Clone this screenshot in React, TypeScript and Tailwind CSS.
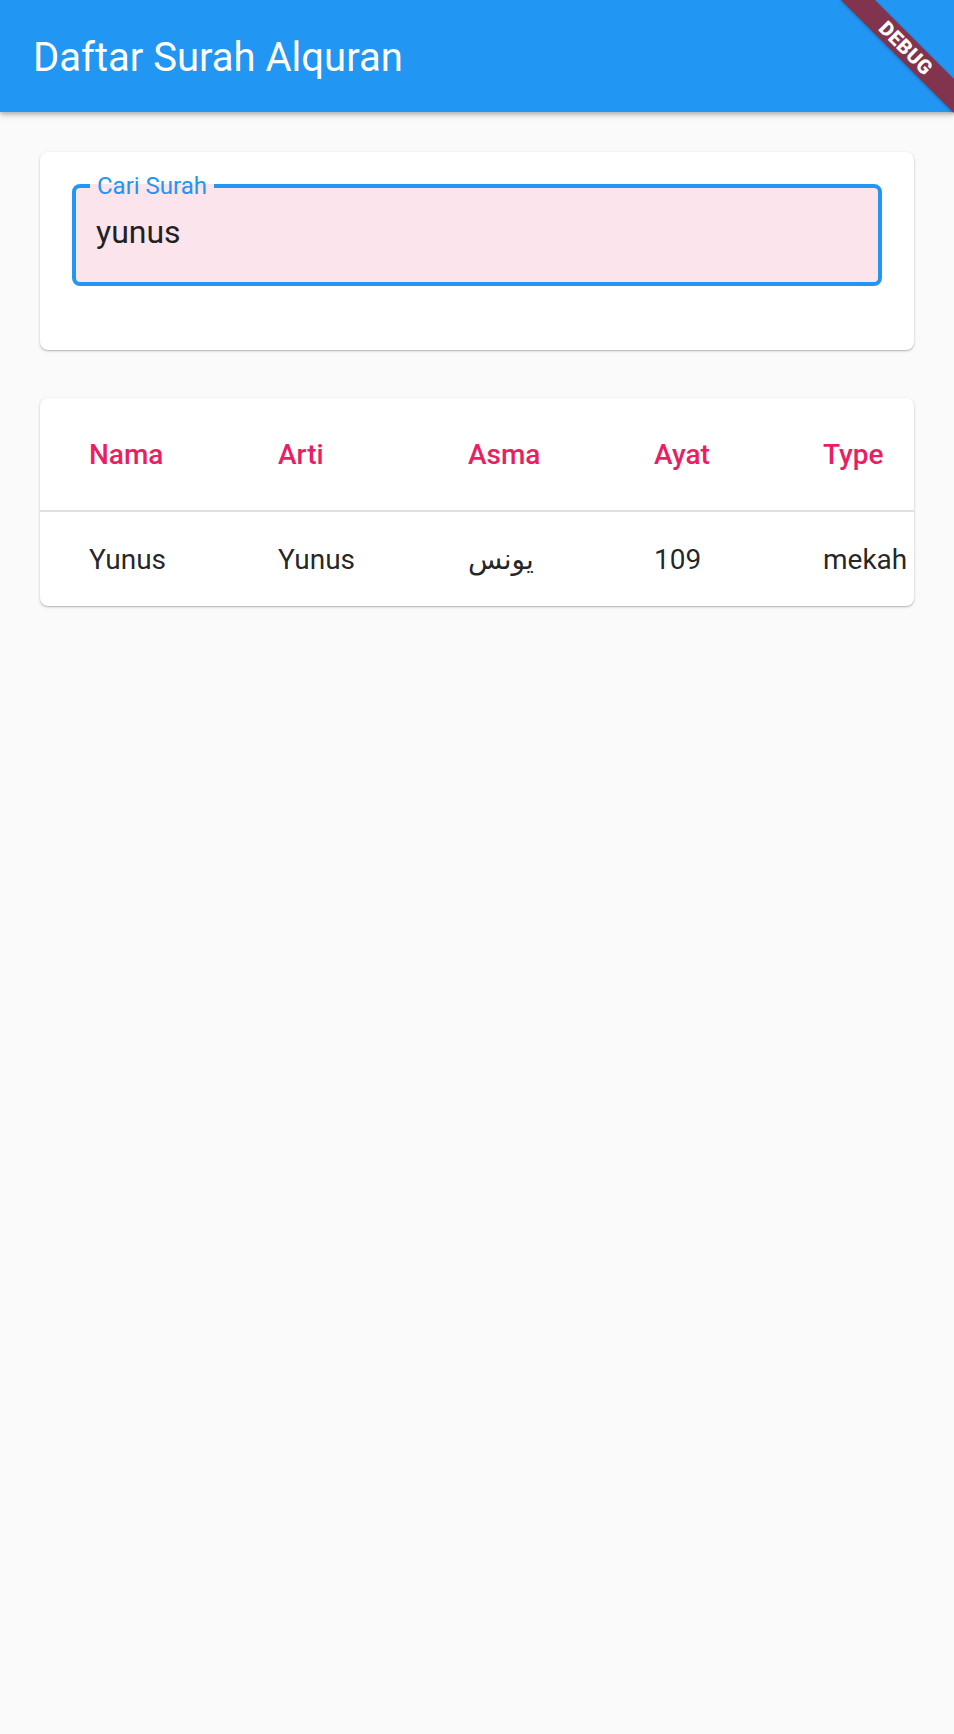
import React from "react";

const columns = [
  { label: "Nama", w: "w-[77px]" },
  { label: "Arti", w: "w-[78px]" },
  { label: "Asma", w: "w-[74px]" },
  { label: "Ayat", w: "w-[57px]" },
  { label: "Type", w: "w-[82px]" },
];

const rows = [["Yunus", "Yunus", "يونس", "109", "mekah"]];

const App = () => {
  return (
    <div className="relative min-h-[1734px] overflow-hidden bg-[#fafafa] font-['Roboto','DejaVu_Sans',sans-serif]">
      {/* App bar */}
      <header className="relative z-10 flex h-[112px] items-center bg-[#2196f3] px-[33px] pt-[4px] shadow-[0_2px_4px_rgba(0,0,0,0.2),0_4px_6px_rgba(0,0,0,0.12)]">
        <h1 className="text-[40px] leading-none font-normal text-white">Daftar Surah Alquran</h1>
      </header>

      {/* Debug banner */}
      <div className="absolute top-[36px] left-[826px] z-20 flex h-[24px] w-[160px] rotate-45 items-center justify-center bg-[#82344f] shadow-[0_1px_3px_rgba(0,0,0,0.25)]">
        <span className="text-[20px] leading-none font-black tracking-[0.5px] text-white">DEBUG</span>
      </div>

      <main className="px-[40px] pt-[40px]">
        {/* Search card */}
        <section className="rounded-[8px] bg-white px-[32px] pt-[32px] pb-[64px] shadow-[0_1px_3px_rgba(0,0,0,0.2),0_1px_1px_rgba(0,0,0,0.12)]">
          <div className="relative h-[102px] rounded-[8px] border-4 border-[#2196f3] bg-[#fce4ec] pt-[28px] pl-[20px]">
            <span className="absolute top-[-14px] left-[14px] bg-[linear-gradient(to_bottom,white_42%,#fce4ec_42%)] px-[7px] text-[24px] leading-[24px] text-[#2196f3]">
              Cari Surah
            </span>
            <div className="text-[32px] leading-[32px] text-[#212121]">yunus</div>
          </div>
        </section>

        {/* Result table */}
        <section className="mt-[48px] overflow-hidden rounded-[8px] bg-white shadow-[0_1px_3px_rgba(0,0,0,0.2),0_1px_1px_rgba(0,0,0,0.12)]">
          <div className="flex h-[114px] items-center gap-x-[112px] border-b-2 border-[#e0e0e0] px-[49px] pt-[2px]">
            {columns.map((c) => (
              <div key={c.label} className={`${c.w} shrink-0 text-[28px] leading-none font-medium whitespace-nowrap text-[#e91e63]`}>
                {c.label}
              </div>
            ))}
          </div>
          {rows.map((r, i) => (
            <div key={i} className="flex h-[94px] items-center gap-x-[112px] px-[49px] pt-[2px]">
              {r.map((cell, j) => (
                <div key={j} className={`${columns[j].w} shrink-0 text-[28px] leading-none whitespace-nowrap text-[#000000de]`}>
                  {cell}
                </div>
              ))}
            </div>
          ))}
        </section>
      </main>
    </div>
  );
};

export default App;
